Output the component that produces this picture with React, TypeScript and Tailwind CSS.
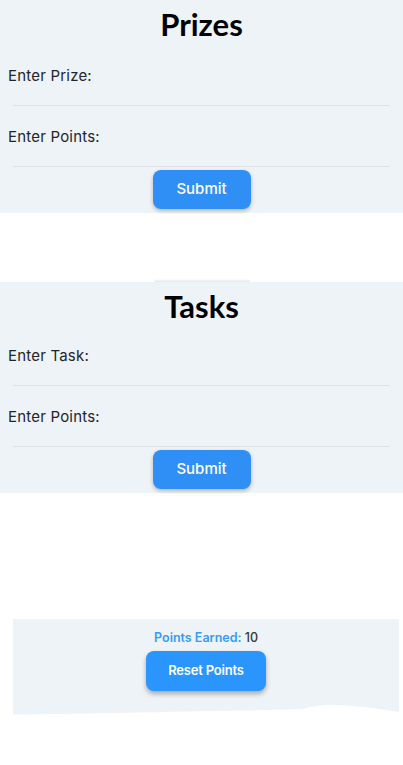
import React from "react";

interface FormPanelProps {
  title: string;
  firstLabel: string;
  gapTop: number;
}

function Field({ label, first, gapTop }: { label: string; first?: boolean; gapTop: number }) {
  return (
    <div className={first ? (gapTop === 22 ? "pt-[22px]" : "pt-[20px]") : "pt-[21px]"}>
      <label className="block text-[15px] leading-[20px] text-[#22252a] tracking-[0.2px]">{label}</label>
      <input
        type="text"
        className="mx-[5px] block h-[20px] w-[calc(100%-10px)] border-b border-[#dde1e6] bg-transparent outline-none"
      />
    </div>
  );
}

function FormPanel({ title, firstLabel, gapTop }: FormPanelProps) {
  return (
    <section className="flex flex-col bg-[#eef3f8] px-2 pb-[4px]">
      <h1 className="pt-[4px] text-center font-['Lato','Inter',sans-serif] text-[31px] font-bold leading-[40px] text-black">
        {title}
      </h1>
      <Field label={firstLabel} first gapTop={gapTop} />
      <Field label="Enter Points:" gapTop={gapTop} />
      <button className="mx-auto mt-[3px] h-[39px] w-[98px] rounded-lg bg-[#2f8ff5] text-[15px] font-medium text-white shadow-[0_2px_4px_rgba(0,0,0,0.25)]">
        Submit
      </button>
    </section>
  );
}

export default function App() {
  return (
    <div className="min-h-[765px] bg-white font-['Inter','Liberation_Sans',sans-serif]">
      <FormPanel title="Prizes" firstLabel="Enter Prize:" gapTop={22} />

      <div className="flex h-[69px] items-end justify-center">
        <div className="h-[3px] w-[96px] rounded-full bg-gradient-to-b from-white to-[#e3e6ea]" />
      </div>

      <FormPanel title="Tasks" firstLabel="Enter Task:" gapTop={20} />

      <div className="h-[126px]" />

      <section className="relative ml-[13px] flex w-[386px] flex-col items-center bg-[#eef3f8] pb-[24px] pt-[11px]">
        <p className="text-[12.5px] leading-[16px]">
          <span className="font-semibold text-[#3a9af6]">Points Earned: </span>
          <span className="font-medium text-[#34383d]">10</span>
        </p>
        <button className="mt-[5px] h-[40px] w-[120px] rounded-lg bg-[#2a95fc] text-[13px] font-semibold tracking-[-0.2px] text-white shadow-[0_3px_5px_rgba(0,0,0,0.3)]">
          Reset Points
        </button>
        <svg
          className="absolute bottom-0 left-0 h-[12px] w-[386px]"
          viewBox="0 0 386 12"
          preserveAspectRatio="none"
        >
          <path
            d="M0 12 L0 11.5 C60 11 100 10 130 9.5 C190 8 250 7.5 290 6 C300 3 308 2 316 2 C340 2 360 5 386 9 L386 12 Z"
            fill="#ffffff"
          />
        </svg>
      </section>
    </div>
  );
}
